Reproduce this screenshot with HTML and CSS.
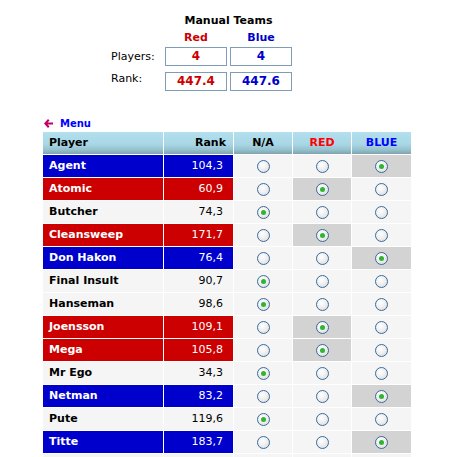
FILE: index.html
```html
<!DOCTYPE html>
<html lang="en">
<head>
    <meta charset="UTF-8">
    <title>Manual Teams</title>
    <link rel="stylesheet" href="styles.css">
</head>
<body>
    <!-- team summary -->
    <div class="summary">
        <div class="summary-title">Manual Teams</div>
        <div></div>
        <div class="team red">Red</div>
        <div class="team blue">Blue</div>

        <div class="label label-first">Players:</div>
        <div class="box box-first red">4</div>
        <div class="box box-first blue">4</div>

        <div class="label">Rank:</div>
        <div class="box red">447.4</div>
        <div class="box blue">447.6</div>
    </div>

    <a class="menu-link" href="#">
        <svg width="9" height="9" viewBox="0 0 9 9">
            <path d="M4 0 L0 4.5 L4 9 L5.5 7.6 L3.6 5.6 L9 5.6 L9 3.4 L3.6 3.4 L5.5 1.4 Z" fill="#c0006a"/>
        </svg>
        Menu
    </a>

    <!-- player list -->
    <div class="players" id="players">
        <div class="th">Player</div>
        <div class="th th-rank">Rank</div>
        <div class="th th-mid">N/A</div>
        <div class="th th-mid th-red">RED</div>
        <div class="th th-mid th-blue">BLUE</div>
    </div>

    <script>
        // team: 0 = n/a, 1 = red, 2 = blue
        const players = [
            ['Agent', '104,3', 2],
            ['Atomic', '60,9', 1],
            ['Butcher', '74,3', 0],
            ['Cleansweep', '171,7', 1],
            ['Don Hakon', '76,4', 2],
            ['Final Insult', '90,7', 0],
            ['Hanseman', '98,6', 0],
            ['Joensson', '109,1', 1],
            ['Mega', '105,8', 1],
            ['Mr Ego', '34,3', 0],
            ['Netman', '83,2', 2],
            ['Pute', '119,6', 0],
            ['Titte', '183,7', 2],
            ['', '', 0]
        ];
        const rowClass = ['row-none', 'row-red', 'row-blue'];
        const list = document.getElementById('players');

        players.forEach(function (p) {
            let html = '<div class="td name ' + rowClass[p[2]] + '">' + p[0] + '</div>';
            html += '<div class="td rank ' + rowClass[p[2]] + '">' + p[1] + '</div>';
            for (let t = 0; t < 3; t++) {
                const on = p[2] === t;
                const cell = on && t > 0 ? 'td pick picked' : 'td pick';
                html += '<div class="' + cell + '"><span class="radio' + (on ? ' on' : '') + '"></span></div>';
            }
            list.insertAdjacentHTML('beforeend', html);
        });
    </script>
</body>
</html>
```

FILE: styles.css
```css
/* base */
* {
    margin: 0;
    padding: 0;
    box-sizing: border-box;
}

body {
    font-family: "DejaVu Sans", Verdana, sans-serif;
    font-size: 11px;
    color: #000;
    background: #fff;
}

/* team summary */
.summary {
    display: grid;
    grid-template-columns: 51px 62px 62px;
    column-gap: 3px;
    margin: 14px 0 0 111px;
    width: 181px;
}

.summary-title {
    grid-column: 2 / 4;
    text-align: center;
    font-weight: bold;
    line-height: 13px;
}

.team {
    text-align: center;
    font-weight: bold;
    line-height: 13px;
    margin-top: 4px;
}

.label {
    align-self: center;
}

.box {
    height: 19px;
    line-height: 17px;
    border: 1px solid #7f9db9;
    text-align: center;
    font-weight: bold;
    font-size: 12px;
    margin-top: 6px;
}

.label-first,
.box-first {
    margin-top: 3px;
}

.red { color: #cc0000; }
.blue { color: #0000cc; }

/* back link */
.menu-link {
    display: flex;
    align-items: center;
    gap: 7px;
    margin: 26px 0 0 44px;
    height: 12px;
    color: #0000ff;
    font-weight: bold;
    font-size: 10px;
    text-decoration: none;
}

/* player table */
.players {
    display: grid;
    grid-template-columns: 120px 69px 58px 58px 59px;
    grid-auto-rows: 22px;
    gap: 1px;
    margin: 3px 0 0 43px;
    width: 368px;
}

.th {
    background: linear-gradient(#b3dfee 0%, #a9d7e6 55%, #97c2cf 80%, #7ea3ad 100%);
    font-weight: bold;
    line-height: 22px;
    padding-left: 6px;
}

.th-rank {
    text-align: right;
    padding: 0 7px 0 0;
}

.th-mid {
    text-align: center;
    padding: 0;
}

.th-red { color: #ff0000; }
.th-blue { color: #0000ff; }

.td {
    line-height: 22px;
    background: #f5f5f5;
}

.name {
    font-weight: bold;
    padding-left: 6px;
}

.rank {
    text-align: right;
    padding-right: 10px;
}

.row-red {
    background: #cc0000;
    color: #fff;
}

.row-blue {
    background: #0000cc;
    color: #fff;
}

.pick {
    display: flex;
    align-items: center;
    justify-content: center;
}

.picked {
    background: #d3d3d3;
}

/* radio look */
.radio {
    width: 13px;
    height: 13px;
    border-radius: 50%;
    border: 1px solid #3a6b9c;
    background: radial-gradient(circle at 40% 35%, #ffffff 0%, #f0f0f0 45%, #d6d6d6 100%);
    display: flex;
    align-items: center;
    justify-content: center;
}

.radio.on::after {
    content: "";
    width: 5px;
    height: 5px;
    border-radius: 50%;
    background: #2fb52f;
}
```
